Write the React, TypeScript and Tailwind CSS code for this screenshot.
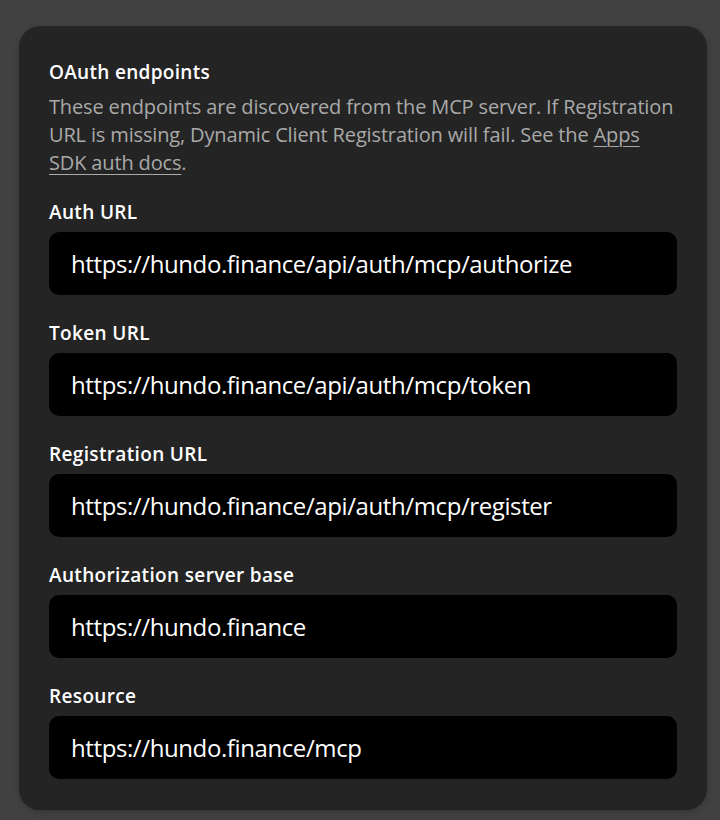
import React from "react";

const fields = [
  { label: "Auth URL", value: "https://hundo.finance/api/auth/mcp/authorize" },
  { label: "Token URL", value: "https://hundo.finance/api/auth/mcp/token" },
  { label: "Registration URL", value: "https://hundo.finance/api/auth/mcp/register" },
  { label: "Authorization server base", value: "https://hundo.finance" },
  { label: "Resource", value: "https://hundo.finance/mcp" },
];

export default function App() {
  return (
    <div
      className="min-h-screen w-full bg-[#414141] pt-[27px] pl-[20px] pr-[14px] pb-[12px]"
      style={{ fontFamily: '"Segoe UI", "Open Sans", "Noto Sans", sans-serif' }}
    >
      <div className="w-[686px] rounded-[20px] bg-[#242424] px-[29px] pt-[31px] pb-[30px] shadow-[0_2px_6px_rgba(0,0,0,0.25),0_0_0_1px_#2a2a2a]">
        <h2 className="text-[19px] leading-[28px] font-semibold text-white tracking-[0.3px]">
          OAuth endpoints
        </h2>
        <p className="mt-[7px] text-[20px] leading-[28px] text-[#a9a9a9] tracking-[-0.15px]">
          These endpoints are discovered from the MCP server. If Registration URL is missing, Dynamic Client Registration will fail. See the{" "}
          <a href="#" className="underline underline-offset-[4px] decoration-[1px]">
            Apps SDK auth docs
          </a>
          .
        </p>
        <div className="mt-[21px] flex flex-col gap-[24px]">
          {fields.map((f) => (
            <div key={f.label} className="flex flex-col">
              <label className="text-[19px] leading-[28px] font-semibold text-white tracking-[0.35px]">
                {f.label}
              </label>
              <input
                readOnly
                value={f.value}
                className="mt-[6px] h-[63px] w-full rounded-[10px] bg-black px-[22px] text-[24px] text-white outline-none tracking-[-0.4px]"
                style={{ fontFamily: '"Segoe UI", "Open Sans", "Noto Sans", sans-serif' }}
              />
            </div>
          ))}
        </div>
      </div>
    </div>
  );
}
